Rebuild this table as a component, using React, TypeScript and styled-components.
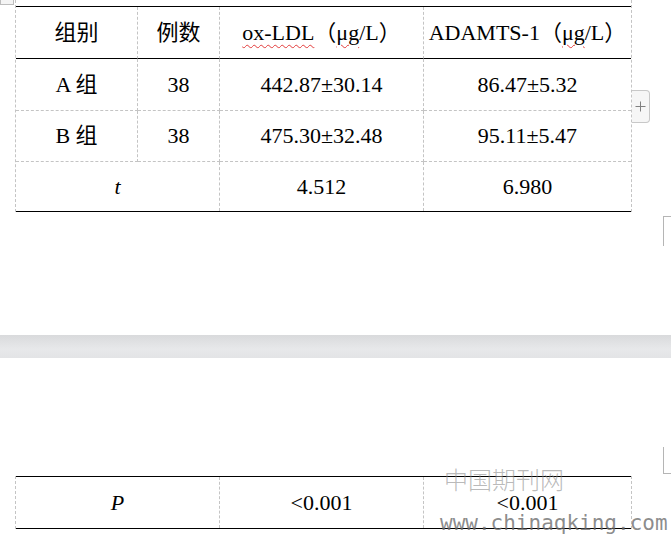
import React from 'react';
import styled, { createGlobalStyle } from 'styled-components';

const Global = createGlobalStyle`
  html, body { margin: 0; padding: 0; background: #fff; }
  body { font-family: "Liberation Serif", "Noto Sans CJK SC", serif; }
`;

const Page = styled.div`
  position: relative;
  width: 671px;
  height: 540px;
  overflow: hidden;
  background: #fff;
`;

const Sheet = styled.section<{ $h: number; $pt: number }>`
  box-sizing: border-box;
  height: ${(p) => p.$h}px;
  padding-top: ${(p) => p.$pt}px;
`;

const PageGap = styled.div`
  height: 23px;
  background: linear-gradient(#d9dadc, #e7e8ea 60%, #e3e4e6);
`;

const Frame = styled.div<{ $ext: number }>`
  margin-left: 15px;
  width: 615px;
  padding-top: ${(p) => p.$ext}px;
  border-left: 1px dashed #c4c4c4;
  border-right: 1px dashed #c4c4c4;
`;

const Grid = styled.div<{ $rows: string }>`
  display: grid;
  grid-template-columns: 122px 82px 204px 207px;
  grid-template-rows: ${(p) => p.$rows};
  border-top: 1px solid #000;
  border-bottom: 1px solid #000;
`;

type Line = 'solid' | 'dashed' | 'none';

const Cell = styled.div<{ $span?: number; $line?: Line; $end?: boolean; $italic?: boolean }>`
  grid-column: span ${(p) => p.$span ?? 1};
  display: flex;
  align-items: center;
  justify-content: center;
  box-sizing: border-box;
  border-right: ${(p) => (p.$end ? 'none' : '1px dashed #c4c4c4')};
  border-bottom: ${(p) =>
    p.$line === 'solid' ? '1px solid #000' : p.$line === 'none' ? 'none' : '1px dashed #c4c4c4'};
  font-size: 22px;
  line-height: 22px;
  font-style: ${(p) => (p.$italic ? 'italic' : 'normal')};
  color: #000;
  white-space: nowrap;
`;

const Squiggle = styled.span`
  text-decoration: underline wavy #e23b3b;
  text-decoration-thickness: 1px;
  text-underline-offset: 4px;
`;

const Wide = styled.span`
  display: inline-block;
  width: 22px;
  text-align: center;
`;

const MoveHandle = styled.div`
  position: absolute;
  top: -9px;
  left: 0;
  width: 12px;
  height: 12px;
  border: 1px solid #bdbdbd;
  background: #f4f4f4;
`;

const AddTab = styled.div`
  position: absolute;
  top: 90px;
  left: 632px;
  width: 18px;
  height: 33px;
  box-sizing: border-box;
  border: 1px solid #c8c8c8;
  border-left: none;
  border-radius: 0 4px 4px 0;
  background: #f6f6f6;
  display: flex;
  align-items: center;
  justify-content: center;
`;

const CornerMark = styled.div<{ $top: number; $h: number; $edge: 'top' | 'bottom' }>`
  position: absolute;
  left: 663px;
  top: ${(p) => p.$top}px;
  width: 10px;
  height: ${(p) => p.$h}px;
  box-sizing: border-box;
  border-left: 1px solid #b5b5b5;
  ${(p) => (p.$edge === 'top' ? 'border-top' : 'border-bottom')}: 1px solid #b5b5b5;
`;

const StampCn = styled.div`
  position: absolute;
  top: 467px;
  left: 444px;
  font-family: "Noto Sans CJK SC", sans-serif;
  font-weight: 300;
  font-size: 24px;
  line-height: 1;
  color: rgba(140, 140, 140, 0.6);
`;

const StampUrl = styled.div`
  position: absolute;
  top: 513px;
  left: 440px;
  font-family: "DejaVu Sans Mono", monospace;
  font-size: 21px;
  line-height: 1;
  color: rgba(110, 110, 110, 0.8);
`;

export default function App() {
  return (
    <>
      <Global />
      <Page>
        <Sheet $h={335} $pt={0}>
          <Frame $ext={6}>
            <Grid $rows="52px 52px 51px 49px">
              <Cell $line="solid">组别</Cell>
              <Cell $line="solid">例数</Cell>
              <Cell $line="solid">
                <Squiggle>ox-LDL</Squiggle>
                <Wide>（</Wide>
                <Squiggle>μg</Squiggle>/L<Wide>）</Wide>
              </Cell>
              <Cell $line="solid" $end>
                ADAMTS-1<Wide>（</Wide>
                <Squiggle>μg</Squiggle>/L<Wide>）</Wide>
              </Cell>

              <Cell>A 组</Cell>
              <Cell>38</Cell>
              <Cell>442.87±30.14</Cell>
              <Cell $end>86.47±5.32</Cell>

              <Cell>B 组</Cell>
              <Cell>38</Cell>
              <Cell>475.30±32.48</Cell>
              <Cell $end>95.11±5.47</Cell>

              <Cell $span={2} $line="none" $italic>t</Cell>
              <Cell $line="none">4.512</Cell>
              <Cell $line="none" $end>6.980</Cell>
            </Grid>
          </Frame>
        </Sheet>
        <PageGap />
        <Sheet $h={182} $pt={118}>
          <Frame $ext={0}>
            <Grid $rows="51px">
              <Cell $span={2} $line="none" $italic>P</Cell>
              <Cell $line="none">&lt;0.001</Cell>
              <Cell $line="none" $end>&lt;0.001</Cell>
            </Grid>
          </Frame>
        </Sheet>

        <MoveHandle />
        <AddTab>
          <svg width="11" height="11" viewBox="0 0 11 11">
            <path d="M5.5 0.5v10M0.5 5.5h10" stroke="#808080" strokeWidth="1" />
          </svg>
        </AddTab>
        <CornerMark $top={216} $h={30} $edge="top" />
        <CornerMark $top={447} $h={27} $edge="bottom" />
        <StampCn>中国期刊网</StampCn>
        <StampUrl>www.chinaqking.com</StampUrl>
      </Page>
    </>
  );
}
